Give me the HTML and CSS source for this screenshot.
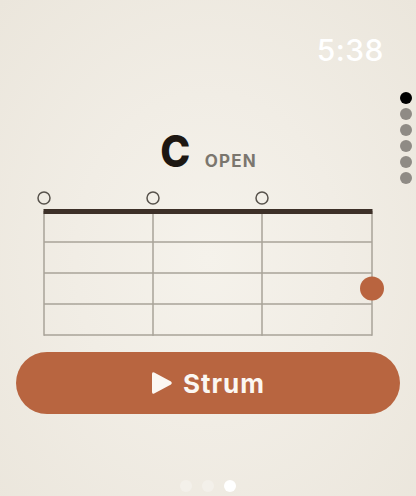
FILE: index.html
```html
<!DOCTYPE html>
<html lang="en">
<head>
  <meta charset="UTF-8">
  <meta name="viewport" content="width=device-width, initial-scale=1.0">
  <title>Chord</title>
  <link rel="stylesheet" href="styles.css">
</head>
<body>
  <div class="screen">
    <div class="status">5:38</div>

    <div class="chord-title">
      <span class="chord-name">C</span>
      <span class="chord-kind">OPEN</span>
    </div>

    <svg class="chart" width="416" height="150" viewBox="0 0 416 150">
      <!-- open strings -->
      <circle class="open" cx="44" cy="8" r="6"/>
      <circle class="open" cx="153" cy="8" r="6"/>
      <circle class="open" cx="262" cy="8" r="6"/>
      <!-- frets -->
      <line class="fret" x1="44" y1="52" x2="372" y2="52"/>
      <line class="fret" x1="44" y1="83" x2="372" y2="83"/>
      <line class="fret" x1="44" y1="114" x2="372" y2="114"/>
      <line class="fret" x1="44" y1="145" x2="372" y2="145"/>
      <!-- strings -->
      <line class="string" x1="44" y1="21" x2="44" y2="145.75"/>
      <line class="string" x1="153" y1="21" x2="153" y2="145.75"/>
      <line class="string" x1="262" y1="21" x2="262" y2="145.75"/>
      <line class="string" x1="372" y1="21" x2="372" y2="145.75"/>
      <!-- nut -->
      <rect class="nut" x="43.5" y="19" width="329" height="5"/>
      <!-- finger -->
      <circle class="finger" cx="372" cy="98.5" r="12"/>
    </svg>

    <button class="strum">
      <svg class="play" width="22" height="24" viewBox="0 0 22 24">
        <path d="M3.2 1.6 Q1 0.4 1 3 V21 Q1 23.6 3.2 22.4 L20 13.4 Q21.8 12 20 10.6 Z"/>
      </svg>
      <span>Strum</span>
    </button>

    <div class="side-dots">
      <span class="dot active"></span>
      <span class="dot"></span>
      <span class="dot"></span>
      <span class="dot"></span>
      <span class="dot"></span>
      <span class="dot"></span>
    </div>

    <div class="page-dots">
      <span></span>
      <span></span>
      <span class="current"></span>
    </div>
  </div>
</body>
</html>
```

FILE: styles.css
```css
html, body {
  margin: 0;
  padding: 0;
}

body {
  width: 416px;
  height: 496px;
  overflow: hidden;
  font-family: Inter, "Liberation Sans", sans-serif;
  background: radial-gradient(ellipse at 50% 52%, #f5f2eb 0%, #f1ede5 45%, #ebe6dc 100%);
}

.screen {
  position: relative;
  width: 416px;
  height: 496px;
  display: flex;
  flex-direction: column;
}

.status {
  height: 50px;
  padding: 30px 32px 0 0;
  text-align: right;
  font-size: 30px;
  font-weight: 500;
  line-height: 40px;
  color: #fff;
  letter-spacing: 0.5px;
}

.chord-title {
  margin-top: 49px;
  display: flex;
  justify-content: center;
  align-items: baseline;
  gap: 13px;
  height: 44px;
  line-height: 44px;
}

.chord-name {
  display: inline-block;
  font-size: 44px;
  font-weight: 800;
  color: #1d1712;
  transform: scaleX(0.92);
}

.chord-kind {
  font-size: 17px;
  font-weight: 700;
  letter-spacing: 1.2px;
  color: #7b766e;
}

.chart {
  display: block;
  margin-top: 17px;
}

.open {
  fill: none;
  stroke: #57524b;
  stroke-width: 1.5;
}

.fret,
.string {
  stroke: #a8a399;
  stroke-width: 1.5;
}

.nut {
  fill: #3d3028;
}

.finger {
  fill: #b9643f;
}

.strum {
  margin: 12px 16px 0;
  height: 62px;
  border: none;
  border-radius: 31px;
  background: #b86540;
  color: #fbf7f2;
  display: flex;
  align-items: center;
  justify-content: center;
  gap: 10px;
  font-family: Inter, "Liberation Sans", sans-serif;
  font-size: 26px;
  font-weight: 700;
  letter-spacing: 1px;
  padding: 0;
}

.play {
  fill: #fbf7f2;
}

.side-dots {
  position: absolute;
  top: 92px;
  right: 4px;
  display: flex;
  flex-direction: column;
  gap: 4px;
}

.dot {
  width: 12px;
  height: 12px;
  border-radius: 50%;
  background: #8f8b85;
}

.dot.active {
  background: #000;
}

.page-dots {
  position: absolute;
  bottom: 4px;
  left: 180px;
  display: flex;
  gap: 10px;
}

.page-dots span {
  width: 12px;
  height: 12px;
  border-radius: 50%;
  background: #f3f0ea;
}

.page-dots .current {
  background: #fff;
}
```
